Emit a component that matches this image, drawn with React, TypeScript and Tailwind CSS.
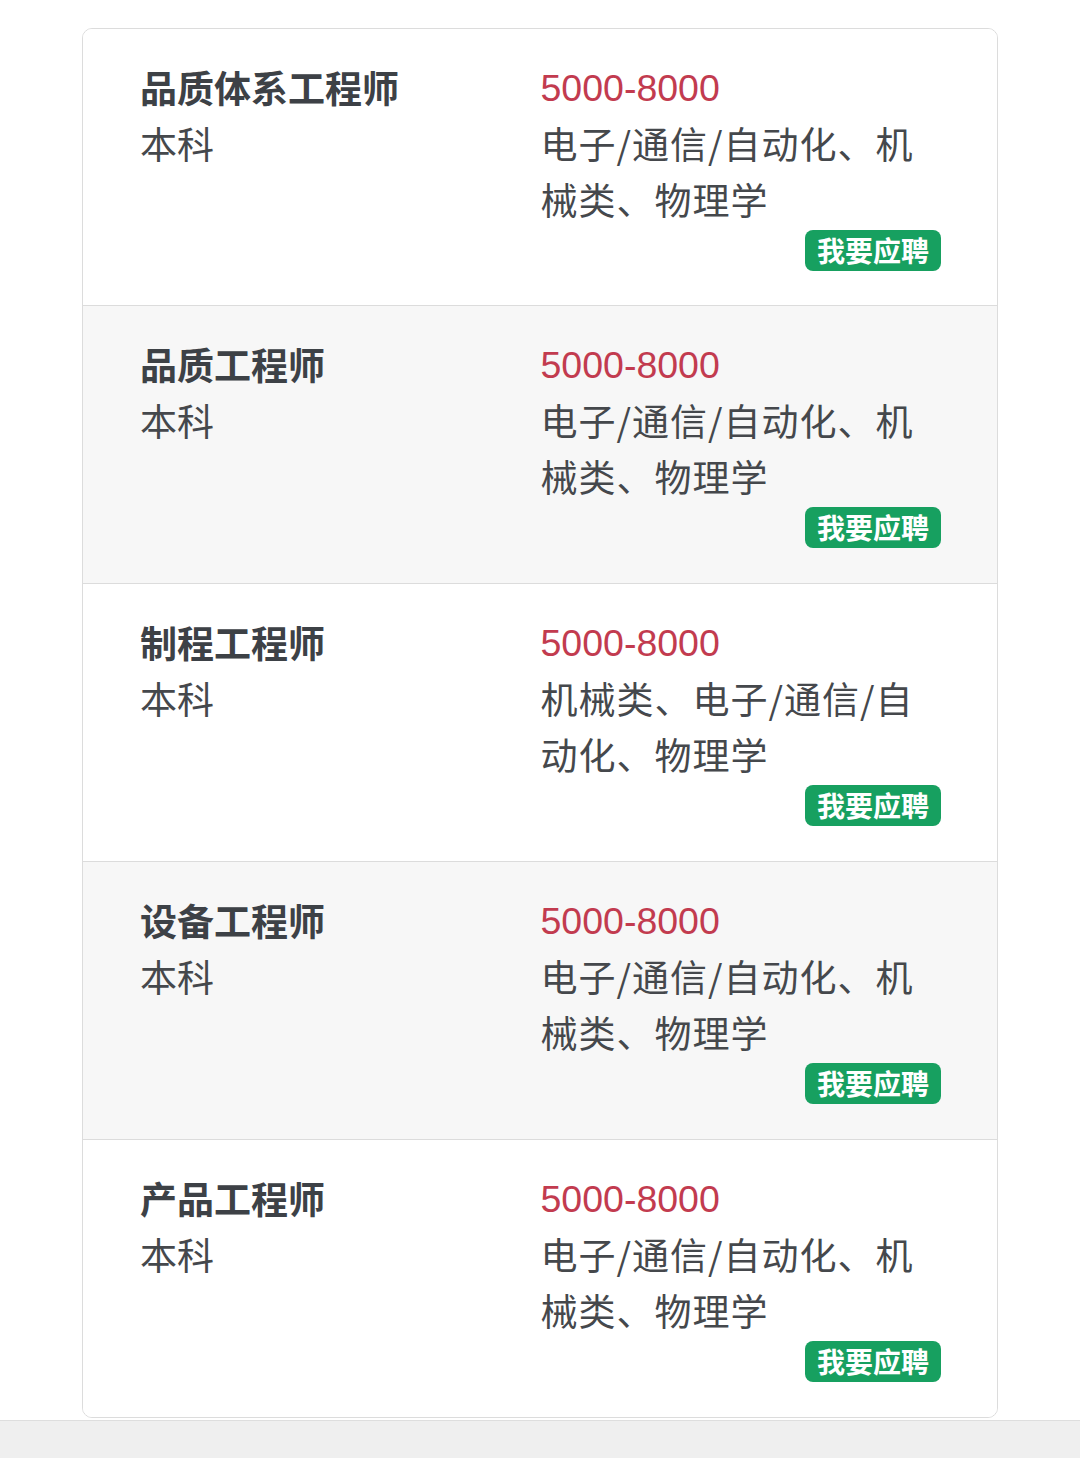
const jobs = [
  { title: '品质体系工程师', major: '电子/通信/自动化、机械类、物理学' },
  { title: '品质工程师', major: '电子/通信/自动化、机械类、物理学' },
  { title: '制程工程师', major: '机械类、电子/通信/自动化、物理学' },
  { title: '设备工程师', major: '电子/通信/自动化、机械类、物理学' },
  { title: '产品工程师', major: '电子/通信/自动化、机械类、物理学' }
];

const font = { fontFamily: '"Noto Sans CJK SC", "Noto Sans", sans-serif' };
const latin = { fontFamily: '"Liberation Sans", Arial, sans-serif' };

function JobRow({ title, major, index }: { title: string; major: string; index: number }) {
  const first = index === 0;
  const shaded = index % 2 === 1;
  return (
    <div
      className={`grid grid-cols-2 pl-[57px] pr-[56px] pt-[30px] ${first ? 'h-[276px]' : 'h-[278px] border-t border-[#dcdcdc]'} ${shaded ? 'bg-[#f7f7f7]' : 'bg-white'}`}
    >
      <div>
        <h3 className="text-[37px] font-bold leading-[56px] text-[#3d4146]">{title}</h3>
        <p className="text-[37px] leading-[56px] text-[#45484c]">本科</p>
      </div>
      <div className="flex flex-col">
        <p className="pt-[3px] text-[37.5px] leading-[53px] text-[#c23b4f]" style={latin}>
          5000-8000
        </p>
        <p className="text-[37px] leading-[56px] tracking-[1px] text-[#45484c]">{major}</p>
        <div className="mt-[3px] flex justify-end">
          <button className="h-[41px] rounded-[8px] bg-[#17a060] px-[12px] text-[28px] font-bold leading-[41px] text-white">
            我要应聘
          </button>
        </div>
      </div>
    </div>
  );
}

export default function App() {
  return (
    <div className="min-h-[1458px] bg-white" style={font}>
      <div className="px-[82px] pt-[28px]">
        <div className="overflow-hidden rounded-[10px] border border-[#dcdcdc]">
          {jobs.map((job, i) => (
            <JobRow key={job.title} title={job.title} major={job.major} index={i} />
          ))}
        </div>
      </div>
      <div className="mt-[2px] h-[40px] border-t border-[#dedede] bg-[#efefef]" />
    </div>
  );
}
